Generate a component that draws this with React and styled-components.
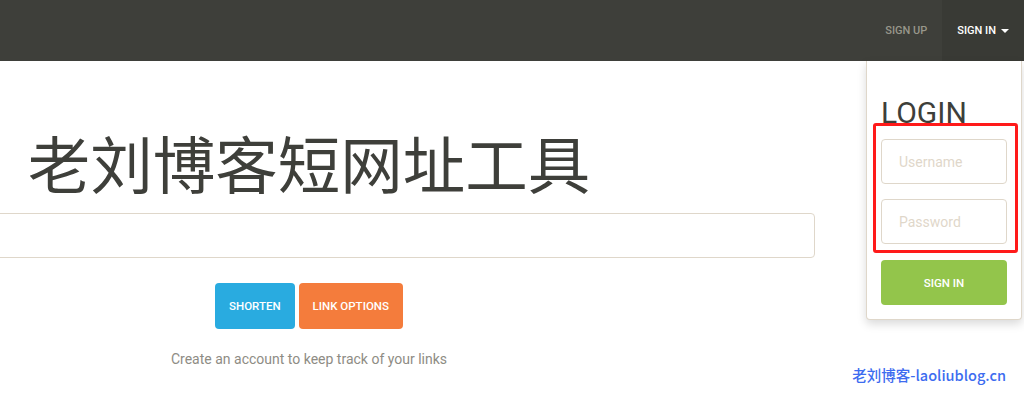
import React from "react";
import styled, { createGlobalStyle } from "styled-components";

const GlobalStyle = createGlobalStyle`
  html, body {
    margin: 0;
    padding: 0;
    background: #ffffff;
    overflow: hidden;
  }
  body {
    font-family: Roboto, "Noto Sans", "Noto Sans CJK SC", sans-serif;
    color: #3e3f3a;
  }
`;

const Page = styled.div`
  position: relative;
  width: 1024px;
  height: 401px;
  overflow: hidden;
`;

const Navbar = styled.nav`
  height: 61px;
  background: #3e3f3a;
  display: flex;
  justify-content: flex-end;
  align-items: stretch;
`;

const NavItem = styled.div`
  position: relative;
  display: flex;
  align-items: center;
  padding: 0 15px;
  font-size: 11px;
  font-weight: 500;
  text-transform: uppercase;
  color: ${(p) => (p.active ? "#ffffff" : "#98978b")};
  background: ${(p) => (p.active ? "#393a35" : "transparent")};
  cursor: pointer;
`;

const Caret = styled.span`
  display: inline-block;
  margin-left: 5px;
  width: 0;
  height: 0;
  border-left: 4px solid transparent;
  border-right: 4px solid transparent;
  border-top: 4px solid #ffffff;
`;

const Dropdown = styled.div`
  position: absolute;
  top: 61px;
  right: 2px;
  width: 156px;
  box-sizing: border-box;
  background: #ffffff;
  border: 1px solid #dfd7ca;
  border-top: none;
  border-radius: 0 0 4px 4px;
  box-shadow: 0 4px 10px rgba(0, 0, 0, 0.15);
  padding: 35px 14px 14px 14px;
  display: flex;
  flex-direction: column;
  z-index: 5;
`;

const LoginTitle = styled.h2`
  margin: 0 0 9px 0;
  font-size: 30px;
  font-weight: 400;
  line-height: 34px;
  color: #3e3f3a;
`;

const Field = styled.input`
  box-sizing: border-box;
  width: 100%;
  height: 45px;
  margin-bottom: ${(p) => p.gap || 0}px;
  padding: 0 17px;
  border: 1px solid #dfd7ca;
  border-radius: 4px;
  font-family: Roboto, sans-serif;
  font-size: 14px;
  color: #3e3f3a;
  outline: none;
  &::placeholder {
    color: #dfd7ca;
  }
`;

const Annotation = styled.div`
  position: absolute;
  left: 6px;
  top: 62px;
  width: 145px;
  height: 130px;
  box-sizing: border-box;
  border: 3px solid #ff1a1a;
  border-radius: 3px;
  pointer-events: none;
`;

const Button = styled.button`
  box-sizing: border-box;
  height: ${(p) => p.h || 46}px;
  padding: 0 ${(p) => p.px || 14}px;
  border: none;
  border-radius: 4px;
  background: ${(p) => p.bg};
  color: #ffffff;
  font-family: Roboto, sans-serif;
  font-size: 11.5px;
  font-weight: 500;
  text-transform: uppercase;
  cursor: pointer;
`;

const Main = styled.main`
  width: 618px;
  display: flex;
  flex-direction: column;
  align-items: center;
`;

const Title = styled.h1`
  margin: 61px 0 0 0;
  font-family: "Noto Sans CJK SC", "Noto Sans", sans-serif;
  font-size: 62.5px;
  font-weight: 400;
  line-height: 80px;
  color: #3e3f3a;
  white-space: nowrap;
`;

const UrlInput = styled.input`
  flex: none;
  box-sizing: border-box;
  width: 1012px;
  height: 45px;
  margin-top: 11px;
  border: 1px solid #dfd7ca;
  border-radius: 4px;
  outline: none;
`;

const ButtonRow = styled.div`
  display: flex;
  gap: 4px;
  margin-top: 25px;
`;

const Hint = styled.p`
  margin: 22px 0 0 0;
  font-size: 14px;
  color: #8e8c84;
`;

const Watermark = styled.div`
  position: absolute;
  right: 18px;
  bottom: 16px;
  font-family: "Noto Sans CJK SC", "Noto Sans", sans-serif;
  font-size: 14.5px;
  font-weight: 500;
  color: #3d6cf0;
`;

export default function App() {
  return (
    <Page>
      <GlobalStyle />
      <Navbar>
        <NavItem>Sign Up</NavItem>
        <NavItem active>
          Sign In
          <Caret />
        </NavItem>
      </Navbar>
      <Dropdown>
        <LoginTitle>LOGIN</LoginTitle>
        <Field placeholder="Username" gap={15} />
        <Field placeholder="Password" gap={16} type="password" />
        <Button bg="#93c54b" h={45} px={0}>
          Sign In
        </Button>
        <Annotation />
      </Dropdown>
      <Main>
        <Title>老刘博客短网址工具</Title>
        <UrlInput />
        <ButtonRow>
          <Button bg="#29abe0" px={14}>Shorten</Button>
          <Button bg="#f47c3c" px={14}>Link Options</Button>
        </ButtonRow>
        <Hint>Create an account to keep track of your links</Hint>
      </Main>
      <Watermark>老刘博客-laoliublog.cn</Watermark>
    </Page>
  );
}
